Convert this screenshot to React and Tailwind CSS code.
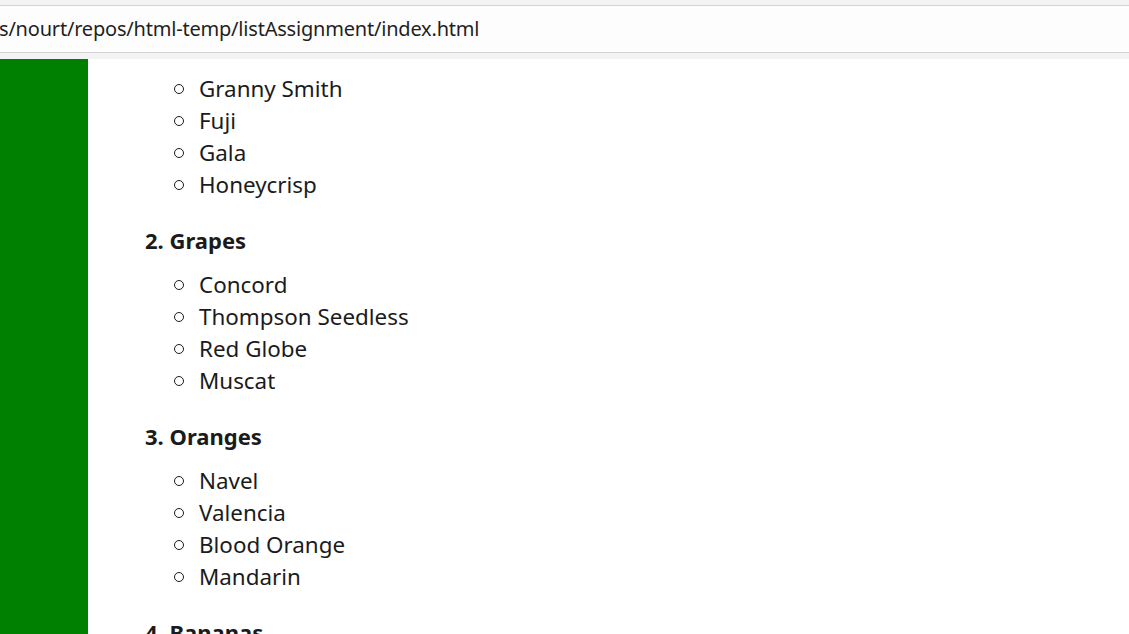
import React from 'react';

const groups = [
    { title: null, items: ['Granny Smith', 'Fuji', 'Gala', 'Honeycrisp'] },
    { title: '2. Grapes', items: ['Concord', 'Thompson Seedless', 'Red Globe', 'Muscat'] },
    { title: '3. Oranges', items: ['Navel', 'Valencia', 'Blood Orange', 'Mandarin'] },
    { title: '4. Bananas', items: [] },
];

const SubList = ({ items }) => (
    <ul className="pl-[54px] text-[22.4px] leading-[32px]">
        {items.map((item) => (
            <li key={item} className="flex items-center">
                <span className="w-[10px] h-[10px] rounded-full border border-[#1b1b1b] mr-[15px] -ml-[25px] shrink-0"></span>
                {item}
            </li>
        ))}
    </ul>
);

const App = () => {
    return (
        <div className="w-[1129px] h-[634px] overflow-hidden bg-white flex flex-col" style={{ fontFamily: '"Noto Sans", "Open Sans", sans-serif' }}>
            <div className="h-[5px] bg-[#f3f3f3] shrink-0"></div>
            <div className="h-[48px] bg-[#fdfdfd] border-y border-[#d4d4d4] flex items-center shrink-0 overflow-hidden">
                <span className="text-[20px] text-[#1f1f1f] whitespace-nowrap -ml-[1px] tracking-[-0.2px]">s/nourt/repos/html-temp/listAssignment/index.html</span>
            </div>
            <div className="h-[6px] bg-[#f3f3f3] shrink-0"></div>
            <div className="flex flex-1 min-h-0">
                <div className="w-[88px] bg-[#008000] shrink-0"></div>
                <div className="flex-1 pl-[57px] pt-[14px] text-[#1b1b1b] overflow-hidden">
                    {groups.map((g, idx) => (
                        <div key={idx} className={g.title ? 'mt-[25px]' : ''}>
                            {g.title && (
                                <div className="text-[22px] font-bold leading-[28px] mb-[15px]">{g.title}</div>
                            )}
                            <SubList items={g.items} />
                        </div>
                    ))}
                </div>
            </div>
        </div>
    );
};

export default App;
